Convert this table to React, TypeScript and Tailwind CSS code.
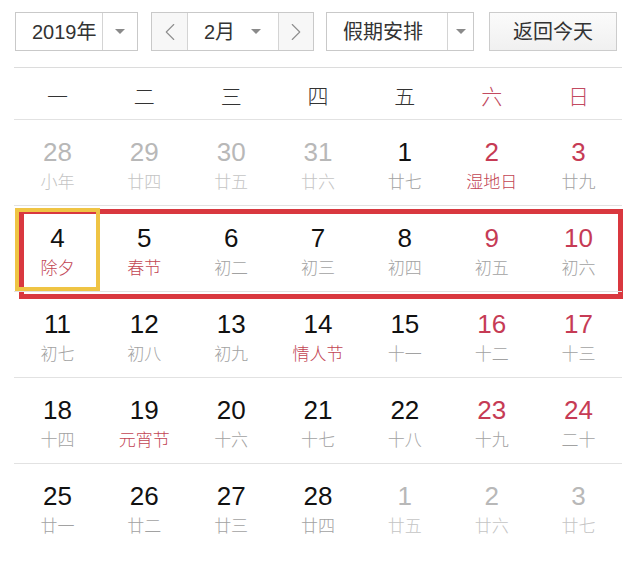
import { ChevronLeft, ChevronRight } from 'lucide-react'

type Day = {
  d: number
  lunar: string
  muted?: boolean // other month
  redNum?: boolean
  redLunar?: boolean
}

const WEEKDAYS = ['一', '二', '三', '四', '五', '六', '日']

const ROWS: Day[][] = [
  [
    { d: 28, lunar: '小年', muted: true },
    { d: 29, lunar: '廿四', muted: true },
    { d: 30, lunar: '廿五', muted: true },
    { d: 31, lunar: '廿六', muted: true },
    { d: 1, lunar: '廿七' },
    { d: 2, lunar: '湿地日', redNum: true, redLunar: true },
    { d: 3, lunar: '廿九', redNum: true },
  ],
  [
    { d: 4, lunar: '除夕', redLunar: true },
    { d: 5, lunar: '春节', redLunar: true },
    { d: 6, lunar: '初二' },
    { d: 7, lunar: '初三' },
    { d: 8, lunar: '初四' },
    { d: 9, lunar: '初五', redNum: true },
    { d: 10, lunar: '初六', redNum: true },
  ],
  [
    { d: 11, lunar: '初七' },
    { d: 12, lunar: '初八' },
    { d: 13, lunar: '初九' },
    { d: 14, lunar: '情人节', redLunar: true },
    { d: 15, lunar: '十一' },
    { d: 16, lunar: '十二', redNum: true },
    { d: 17, lunar: '十三', redNum: true },
  ],
  [
    { d: 18, lunar: '十四' },
    { d: 19, lunar: '元宵节', redLunar: true },
    { d: 20, lunar: '十六' },
    { d: 21, lunar: '十七' },
    { d: 22, lunar: '十八' },
    { d: 23, lunar: '十九', redNum: true },
    { d: 24, lunar: '二十', redNum: true },
  ],
  [
    { d: 25, lunar: '廿一' },
    { d: 26, lunar: '廿二' },
    { d: 27, lunar: '廿三' },
    { d: 28, lunar: '廿四' },
    { d: 1, lunar: '廿五', muted: true },
    { d: 2, lunar: '廿六', muted: true },
    { d: 3, lunar: '廿七', muted: true },
  ],
]

function Caret() {
  return <span className="block h-0 w-0 border-x-[5px] border-t-[5px] border-x-transparent border-t-[#8a8a8a]" />
}

function DayCell({ day }: { day: Day }) {
  const numColor = day.muted ? 'text-[#b8b8b8]' : day.redNum ? 'text-[#c63b55]' : 'text-[#111]'
  const lunarColor = day.muted ? 'text-[#c4c4c4]' : day.redLunar ? 'text-[#c24553]' : 'text-[#a2a2a2]'
  return (
    <div className="flex flex-col items-center pt-[17px]">
      <span className={`text-[26px] leading-[30px] ${numColor}`}>{day.d}</span>
      <span className={`mt-[3px] font-['Noto_Sans_CJK_SC',sans-serif] text-[17px] font-light leading-[22px] ${lunarColor}`}>
        {day.lunar}
      </span>
    </div>
  )
}

export default function App() {
  return (
    <div
      className="h-[563px] w-[631px] overflow-hidden bg-white text-[#333]"
      style={{ fontFamily: '"Liberation Sans", "Noto Sans CJK SC", sans-serif' }}
    >
      {/* Toolbar */}
      <div className="flex h-[51px] items-end pl-[15px]">
        <div className="flex h-[39px] w-[123px] border border-[#c9c9c9] bg-white">
          <div className="flex w-[86px] items-center pl-[16px] text-[20px]">2019年</div>
          <div className="flex flex-1 items-center justify-center border-l border-[#d4d4d4]">
            <Caret />
          </div>
        </div>

        <div className="ml-[13px] flex h-[39px] w-[163px] border border-[#c9c9c9] bg-white">
          <div className="flex w-[35px] items-center justify-center bg-[#f7f7f7] text-[#8e8e8e]">
            <ChevronLeft className="h-[30px] w-[30px]" strokeWidth={0.9} />
          </div>
          <div className="flex flex-1 items-center border-x border-[#d4d4d4] pl-[16px] pr-[17px] text-[20px]">
            <span className="flex-1">2月</span>
            <Caret />
          </div>
          <div className="flex w-[34px] items-center justify-center bg-[#f7f7f7] text-[#8e8e8e]">
            <ChevronRight className="h-[30px] w-[30px]" strokeWidth={0.9} />
          </div>
        </div>

        <div className="ml-[12px] flex h-[39px] w-[148px] border border-[#c9c9c9] bg-white">
          <div className="flex w-[120px] items-center pl-[16px] text-[20px]">假期安排</div>
          <div className="flex flex-1 items-center justify-center border-l border-[#d4d4d4]">
            <Caret />
          </div>
        </div>

        <div className="ml-[15px] flex h-[39px] w-[128px] items-center justify-center border border-[#cccccc] bg-gradient-to-b from-[#fbfbfb] to-[#f0f0f0] text-[20px]">
          返回今天
        </div>
      </div>

      {/* Calendar */}
      <div className="ml-[14px] mt-[16px] w-[608px]">
        <div className="grid h-[52px] grid-cols-7 items-center border-t border-[#dcdcdc] pt-[4px] text-[21px]">
          {WEEKDAYS.map((w, i) => (
            <div
              key={w}
              className={`text-center font-['Noto_Sans_CJK_SC',sans-serif] font-light ${i >= 5 ? 'text-[#c24a60]' : 'text-[#333]'}`}
            >
              {w}
            </div>
          ))}
        </div>

        {ROWS.map((row, r) => (
          <div key={r} className="relative grid h-[86px] grid-cols-7 border-t border-[#e2e2e2]">
            {row.map((day, i) => (
              <DayCell key={i} day={day} />
            ))}
            {r === 1 && (
              <>
                <div className="absolute left-[5px] top-[3px] h-[90px] w-[604px] border-[5px] border-[#d9383f]" />
                <div className="absolute left-[1px] top-[2px] h-[83px] w-[85px] border-[4px] border-[#efc444]" />
              </>
            )}
          </div>
        ))}
      </div>
    </div>
  )
}
